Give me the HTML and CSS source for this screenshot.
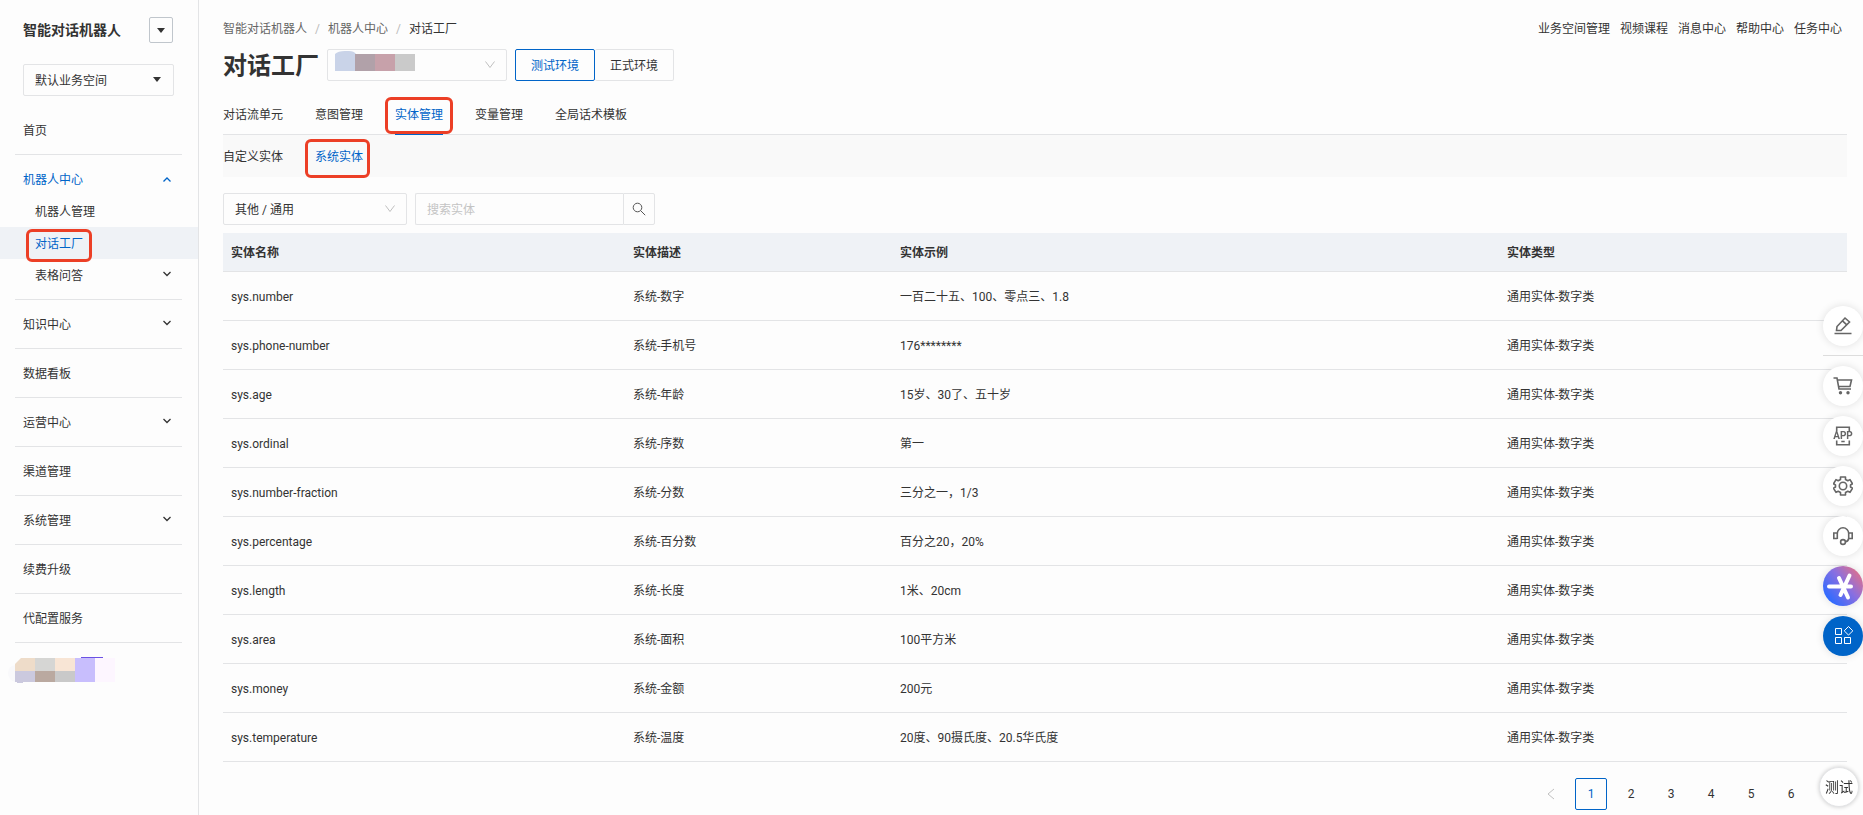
FILE: index.html
```html
<!DOCTYPE html>
<html lang="zh-CN">
<head>
    <meta charset="UTF-8">
    <title>对话工厂</title>
    <link rel="stylesheet" href="styles.css">
</head>
<body>
    <div class="layout">
        <!-- Sidebar -->
        <aside class="sidebar">
            <div class="brand">
                <span class="brand-name">智能对话机器人</span>
                <button class="brand-toggle" type="button" aria-label="切换"><span class="caret"></span></button>
            </div>
            <div class="select-box space-select">
                <select aria-label="业务空间"><option>默认业务空间</option></select>
                <span class="caret"></span>
            </div>
            <nav class="menu">
                <div class="menu-group"><a href="#">首页</a></div>
                <div class="menu-group">
                    <a href="#" class="current">机器人中心
                        <svg class="chevron" viewBox="0 0 10 10"><path d="M1.5 7.500 5 4 8.500 7.500"/></svg>
                    </a>
                    <a href="#" class="sub">机器人管理</a>
                    <a href="#" class="sub selected"><span class="marked">对话工厂</span></a>
                    <a href="#" class="sub">表格问答
                        <svg class="chevron" viewBox="0 0 10 10"><path d="M1.5 2 5 5.500 8.500 2"/></svg>
                    </a>
                </div>
                <div class="menu-group">
                    <a href="#">知识中心
                        <svg class="chevron" viewBox="0 0 10 10"><path d="M1.5 2 5 5.500 8.500 2"/></svg>
                    </a>
                </div>
                <div class="menu-group"><a href="#">数据看板</a></div>
                <div class="menu-group">
                    <a href="#">运营中心
                        <svg class="chevron" viewBox="0 0 10 10"><path d="M1.5 2 5 5.500 8.500 2"/></svg>
                    </a>
                </div>
                <div class="menu-group"><a href="#">渠道管理</a></div>
                <div class="menu-group">
                    <a href="#">系统管理
                        <svg class="chevron" viewBox="0 0 10 10"><path d="M1.5 2 5 5.500 8.500 2"/></svg>
                    </a>
                </div>
                <div class="menu-group"><a href="#">续费升级</a></div>
                <div class="menu-group"><a href="#">代配置服务</a></div>
            </nav>
            <svg class="sidebar-mosaic" viewBox="0 0 108 27" width="108" height="27">
                <path d="M7 8Q0 9 0 16T7 25Z" fill="#f9f9fb"/>
                <path d="M13 1h14v14H7V7Z" fill="#eedcc9"/>
                <path d="M27 1h20v14H27Z" fill="#d6d6d4"/>
                <path d="M47 1h20v14H47Z" fill="#f8e5d5"/>
                <path d="M7 14h20v11H15v1H9v-1H7Z" fill="#cbc9de"/>
                <path d="M27 14h20v11H27Z" fill="#baa9a0"/>
                <path d="M47 14h20v11H47Z" fill="#c9c9c9"/>
                <path d="M67 1h20v24H67Z" fill="#c8befd"/>
                <path d="M87 1h20v24H87Z" fill="#fdf6ff"/>
                <path d="M73 0h22v1H73Z" fill="#6b52e4"/>
            </svg>
        </aside>

        <!-- Main content -->
        <main class="main">
            <div class="topbar">
                <nav class="breadcrumb">
                    <a href="#">智能对话机器人</a><i>/</i><a href="#">机器人中心</a><i>/</i><span>对话工厂</span>
                </nav>
                <nav class="top-links">
                    <a href="#">业务空间管理</a>
                    <a href="#">视频课程</a>
                    <a href="#">消息中心</a>
                    <a href="#">帮助中心</a>
                    <a href="#">任务中心</a>
                </nav>
            </div>

            <div class="title-row">
                <h1>对话工厂</h1>
                <div class="select-box robot-select">
                    <select aria-label="机器人"><option></option></select>
                    <svg class="robot-mosaic" viewBox="0 0 80 20" width="80" height="20">
                        <path d="M0 20V3Q3 0 10 0h4q5 0 7 3v17Z" fill="#c9d3e8"/>
                        <path d="M20 3h20v17H20Z" fill="#b1a1a9"/>
                        <path d="M40 3h20v17H40Z" fill="#c7a1aa"/>
                        <path d="M60 3h20v17H60Z" fill="#cacaca"/>
                    </svg>
                    <svg class="arrow" viewBox="0 0 12 12"><path d="M1.5 2.500 6 8.500 10.500 2.500"/></svg>
                </div>
                <div class="env">
                    <button type="button" class="active">测试环境</button>
                    <button type="button">正式环境</button>
                </div>
            </div>

            <nav class="tabs">
                <a href="#">对话流单元</a>
                <a href="#">意图管理</a>
                <a href="#" class="active marked">实体管理</a>
                <a href="#">变量管理</a>
                <a href="#">全局话术模板</a>
            </nav>
            <nav class="sub-tabs">
                <a href="#">自定义实体</a>
                <a href="#" class="active marked">系统实体</a>
            </nav>

            <div class="filters">
                <div class="select-box type-select">
                    <select aria-label="分类"><option>其他 / 通用</option></select>
                    <svg class="arrow" viewBox="0 0 12 12"><path d="M1.5 2.500 6 8.500 10.500 2.500"/></svg>
                </div>
                <div class="search">
                    <input type="text" placeholder="搜索实体" aria-label="搜索实体">
                    <button type="button" aria-label="搜索">
                        <svg viewBox="0 0 14 14" width="14" height="14"><circle cx="5.500" cy="5.500" r="4.300"/><path d="m8.600 8.600 4.600 4.600"/></svg>
                    </button>
                </div>
            </div>

            <table class="entities">
                <thead>
                    <tr>
                        <th class="col-name">实体名称</th>
                        <th class="col-desc">实体描述</th>
                        <th class="col-example">实体示例</th>
                        <th>实体类型</th>
                    </tr>
                </thead>
                <tbody>
                    <tr><td>sys.number</td><td>系统-数字</td><td>一百二十五、100、零点三、1.8</td><td>通用实体-数字类</td></tr>
                    <tr><td>sys.phone-number</td><td>系统-手机号</td><td>176********</td><td>通用实体-数字类</td></tr>
                    <tr><td>sys.age</td><td>系统-年龄</td><td>15岁、30了、五十岁</td><td>通用实体-数字类</td></tr>
                    <tr><td>sys.ordinal</td><td>系统-序数</td><td>第一</td><td>通用实体-数字类</td></tr>
                    <tr><td>sys.number-fraction</td><td>系统-分数</td><td>三分之一，1/3</td><td>通用实体-数字类</td></tr>
                    <tr><td>sys.percentage</td><td>系统-百分数</td><td>百分之20，20%</td><td>通用实体-数字类</td></tr>
                    <tr><td>sys.length</td><td>系统-长度</td><td>1米、20cm</td><td>通用实体-数字类</td></tr>
                    <tr><td>sys.area</td><td>系统-面积</td><td>100平方米</td><td>通用实体-数字类</td></tr>
                    <tr><td>sys.money</td><td>系统-金额</td><td>200元</td><td>通用实体-数字类</td></tr>
                    <tr><td>sys.temperature</td><td>系统-温度</td><td>20度、90摄氏度、20.5华氏度</td><td>通用实体-数字类</td></tr>
                </tbody>
            </table>

            <div class="pagination">
                <button type="button" class="prev" aria-label="上一页" disabled>
                    <svg viewBox="0 0 12 12" width="12" height="12"><path d="M9 1 3 6l6 5"/></svg>
                </button>
                <button type="button" class="active">1</button>
                <button type="button">2</button>
                <button type="button">3</button>
                <button type="button">4</button>
                <button type="button">5</button>
                <button type="button">6</button>
            </div>
        </main>
    </div>

    <!-- Floating tools -->
    <div class="float-bar">
        <button type="button" aria-label="编辑">
            <svg viewBox="0 0 20 20"><path d="M1.500 17.500h17M3.500 14.500 4 10.500 12 2l4.500 4-8.500 8.500ZM9.500 4.800l4.300 4"/></svg>
        </button>
        <span class="float-line"></span>
        <button type="button" aria-label="购物车">
            <svg viewBox="0 0 20 20"><path d="M.5 2h3.500l2 11h12M4.300 4H18.500l-1.500 6.500H5.500"/><circle class="dot" cx="7.500" cy="16.800" r="1.700"/><circle class="dot" cx="15" cy="16.800" r="1.700"/></svg>
        </button>
        <button type="button" aria-label="APP">
            <svg viewBox="0 0 20 20"><path d="M3.700 5V1.200h12.600V5M3.700 14.500v4.300h12.600v-4.300M8.300 15.500h3.400"/><text x="10" y="13.300">APP</text></svg>
        </button>
        <button type="button" aria-label="设置">
            <svg viewBox="0 0 20 20"><path d="M7.500 1h5v2.500l2.300 1.300 2.200-1.200 2.500 4.200-2 1.200v2l2 1.200-2.500 4.200-2.200-1.200-2.300 1.300V19h-5v-2.500l-2.300-1.300L3 16.400.5 12.200l2-1.200V9l-2-1.200L3 3.600l2.200 1.200 2.300-1.300Z" stroke-linejoin="round"/><circle cx="10" cy="10" r="3.700"/></svg>
        </button>
        <button type="button" aria-label="客服">
            <svg viewBox="0 0 20 20"><path d="M4.300 13V7.500a5.700 5.700 0 0 1 11.400 0V13M4.300 7H.8v5.500h3.500M15.700 7h3.500v5.500h-3.500q-.5 3-3.300 3.300"/><circle cx="10" cy="16" r="2.400"/></svg>
        </button>
        <button type="button" class="ai" aria-label="AI 助手">
            <svg viewBox="0 0 40 40"><path d="M6 20.500h22M16 12l9 19.500M26.500 9.500 17.500 29"/></svg>
        </button>
        <button type="button" class="apps" aria-label="应用">
            <svg viewBox="0 0 20 20"><path d="M2.500 2.500h6v6h-6ZM2.500 11.500h6v6h-6ZM11.500 11.500h6v6h-6ZM15.500 .5l4.300 4.300-4.300 4.300-4.300-4.300Z"/></svg>
        </button>
    </div>
    <button class="test-button" type="button">测试</button>
</body>
</html>
```
FILE: styles.css
```css
* {
    box-sizing: border-box;
}

body {
    margin: 0;
    font-family: Roboto, "Noto Sans CJK SC", sans-serif;
    font-size: 12px;
    line-height: 16px;
    color: #333;
    background-color: #fdfdfd;
}

a {
    color: inherit;
    text-decoration: none;
}

button,
select,
input {
    margin: 0;
    padding: 0;
    font: inherit;
    color: inherit;
    background: none;
    border: 1px solid #e3e4e6;
    border-radius: 2px;
}

button {
    cursor: pointer;
}

svg {
    fill: none;
    stroke: currentColor;
}

.layout {
    display: flex;
    min-height: 100vh;
}

/* Sidebar */
.sidebar {
    flex: none;
    width: 199px;
    padding-top: 17px;
    border-right: 1px solid #e3e4e6;
}

.brand {
    display: flex;
    justify-content: space-between;
    align-items: center;
    padding: 0 25px 0 23px;
}

.brand-name {
    font-size: 14px;
    font-weight: bold;
}

.brand-toggle {
    display: flex;
    justify-content: center;
    align-items: center;
    width: 24px;
    height: 26px;
    border-color: #c0c6cc;
}

.caret {
    border: 4px solid transparent;
    border-top: 5px solid #333;
    border-bottom: 0;
}

/* Drop-downs */
.select-box {
    position: relative;
    height: 32px;
}

.select-box select {
    width: 100%;
    height: 32px;
    padding: 1px 32px 0 11px;
    appearance: none;
}

.select-box .caret,
.select-box .arrow {
    position: absolute;
    top: 10px;
    right: 11px;
    width: 12px;
    height: 12px;
    color: #c0c0c0;
    pointer-events: none;
}

.select-box .caret {
    top: 13px;
    right: 13px;
    width: 0;
    height: 0;
}

.space-select {
    margin: 21px 24px 10px 23px;
}

/* Menu */
.menu-group {
    position: relative;
    padding: 8px 0 9px;
}

.menu-group::after {
    content: "";
    position: absolute;
    left: 15px;
    right: 16px;
    bottom: 0;
    border-bottom: 1px solid #e3e4e6;
}

.menu-group a {
    display: flex;
    justify-content: space-between;
    align-items: center;
    height: 32px;
    padding: 2px 26px 0 23px;
}

.menu-group a.sub {
    padding-left: 35px;
}

.menu-group .current,
.menu-group .selected {
    color: #0064c8;
}

.menu-group .selected {
    background-color: #eff2f6;
}

.menu-group .marked::before {
    inset: -7px -9px -10px;
}

.chevron {
    width: 10px;
    height: 10px;
    margin-bottom: 2px;
    stroke-width: 1.3;
}

.sidebar-mosaic {
    display: block;
    margin: 14px 0 0 8px;
    stroke: none;
}

/* Red frame round the steps to follow */
.marked {
    position: relative;
}

.marked::before {
    content: "";
    position: absolute;
    border: 3px solid #ec3f26;
    border-radius: 6px;
    pointer-events: none;
}

/* Main */
.main {
    flex: 1;
    min-width: 0;
    padding: 21px 16px 0 24px;
}

.topbar {
    display: flex;
    justify-content: space-between;
}

.breadcrumb {
    color: #666;
}

.breadcrumb i {
    margin: 0 8px;
    font-style: normal;
    color: #bbb;
}

.breadcrumb span {
    color: #333;
}

.top-links {
    display: flex;
    gap: 10px;
    padding-right: 5px;
}

.title-row {
    display: flex;
    gap: 8px;
    height: 32px;
    margin-top: 12px;
}

h1 {
    margin: 0;
    font-size: 24px;
    line-height: 35px;
}

.robot-select {
    width: 180px;
}

.robot-mosaic {
    position: absolute;
    left: 8px;
    top: 2px;
    stroke: none;
}

.env {
    display: flex;
}

.env button {
    width: 80px;
    height: 32px;
    padding-top: 2px;
}

.env button + button {
    width: 79px;
    border-left: 0;
}

.env .active {
    color: #0064c8;
    border-color: #0064c8;
}

.tabs {
    display: flex;
    gap: 32px;
    margin-top: 16px;
    border-bottom: 1px solid #e3e4e6;
}

.tabs a {
    padding-bottom: 1px;
    line-height: 36px;
}

.tabs .active {
    margin-bottom: -1px;
    padding-bottom: 0;
    border-bottom: 2px solid #0064c8;
    color: #0064c8;
}

.tabs .marked::before {
    inset: 0 -10px -1px;
}

.sub-tabs {
    display: flex;
    gap: 32px;
    background-color: #f9f9f9;
}

.sub-tabs a {
    padding-top: 2px;
    line-height: 40px;
}

.sub-tabs .active {
    color: #0064c8;
}

.sub-tabs .marked::before {
    inset: 4px -7px -1px -10px;
}

/* Filters */
.filters {
    display: flex;
    gap: 8px;
    margin: 16px 0 8px;
}

.type-select {
    width: 184px;
}

.search {
    display: flex;
}

.search input {
    width: 208px;
    height: 32px;
    padding: 1px 11px 0;
    border-right: 0;
    border-radius: 2px 0 0 2px;
}

.search input::placeholder {
    color: #c4c4c4;
}

.search button {
    display: flex;
    justify-content: center;
    align-items: center;
    width: 32px;
    height: 32px;
    border-radius: 0 2px 2px 0;
    color: #555;
}

/* Entity table */
.entities {
    width: 100%;
    table-layout: fixed;
    border-collapse: separate;
    border-spacing: 0;
}

.entities th,
.entities td {
    height: 49px;
    padding: 2px 8px 0;
    text-align: left;
    border-bottom: 1px solid #e3e4e6;
}

.entities th {
    height: 39px;
    background-color: #eff2f6;
}

.col-name {
    width: 402px;
}

.col-desc {
    width: 267px;
}

.col-example {
    width: 607px;
}

/* Pagination */
.pagination {
    display: flex;
    justify-content: flex-end;
    gap: 8px;
    padding: 16px 40px 5px 0;
}

.pagination button {
    width: 32px;
    height: 32px;
    border-color: transparent;
}

.pagination .active {
    color: #0064c8;
    border-color: #0064c8;
}

.pagination .prev {
    display: flex;
    justify-content: center;
    align-items: center;
    color: #c0c0c0;
}

/* Floating tools */
.float-bar {
    position: fixed;
    right: 0;
    top: 306px;
    display: flex;
    flex-direction: column;
    gap: 10px;
}

.float-bar button {
    display: flex;
    justify-content: center;
    align-items: center;
    width: 40px;
    height: 40px;
    border: 0;
    border-radius: 50%;
    color: #666;
    background-color: #fff;
    box-shadow: 0 0 8px rgba(0, 0, 0, 0.12);
}

.float-bar svg {
    width: 20px;
    height: 20px;
    stroke-width: 1.6;
}

.float-bar .dot {
    fill: currentColor;
    stroke: none;
}

.float-bar text {
    font-size: 10px;
    font-weight: bold;
    text-anchor: middle;
    fill: currentColor;
    stroke: none;
}

.float-line {
    height: 1px;
    margin-top: -1px;
    background-color: #ddd;
}

.float-bar .ai {
    color: #fff;
    background: linear-gradient(50deg, #2f6bff 15%, #8a6fe0 55%, #e0708a 90%);
}

.float-bar .ai svg {
    flex: none;
    width: 40px;
    height: 40px;
    stroke-width: 4;
    stroke-linecap: round;
}

.float-bar .apps {
    color: #fff;
    background-color: #0064c8;
}

.float-bar .apps svg {
    stroke-width: 1;
}

.test-button {
    position: fixed;
    right: 4px;
    bottom: 8px;
    width: 40px;
    height: 40px;
    font-size: 14px;
    border-radius: 50%;
    background-color: #fff;
    box-shadow: 0 0 4px rgba(0, 0, 0, 0.2);
}
```
